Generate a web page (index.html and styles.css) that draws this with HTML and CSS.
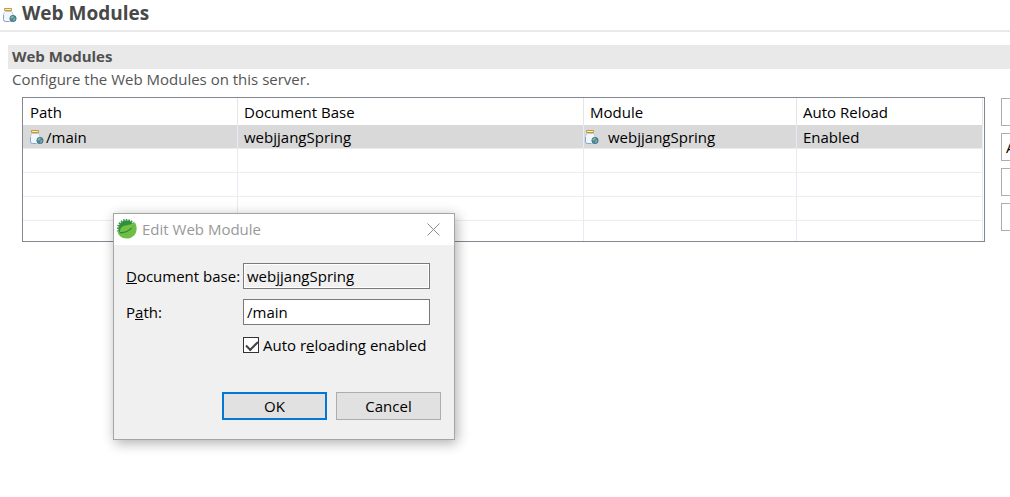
FILE: index.html
```
<!DOCTYPE html>
<html lang="en">
<head>
<meta charset="utf-8">
<title>Web Modules</title>
<meta name="viewport" content="width=device-width, initial-scale=1">
<link rel="stylesheet" href="styles.css">
</head>
<body>

<!-- jar icon, used in the header and in the table -->
<svg class="defs" aria-hidden="true">
  <defs>
    <symbol id="jar" viewBox="0 0 14 16">
      <path d="M2.500 4.500C1 5.500.5 6.800.5 8.500v4c0 1.200.8 2 2 2h6l1.500-3V8c0-1.500-.5-2.500-1.500-3.500z" fill="#f0f6fd" stroke="#b5c8df"/>
      <path d="M.5 8v4.500c0 1.200.8 2 2 2h3.500" fill="none" stroke="#86a5cb"/>
      <path d="M1.500 1.500h7v2h-7z" fill="#fbeebc" stroke="#c9992f"/>
      <circle cx="10" cy="11.500" r="3.200" fill="#4a83b0" stroke="#40708c" stroke-width=".7"/>
      <path d="M7.400 10.200l2-1.500 1.600.8-1.200 1.500-1.800.8zM10.500 11.500l2-.5-.8 2.200-1.500.8z" fill="#89bd70"/>
    </symbol>
  </defs>
</svg>

<header class="page-head">
  <svg class="jar"><use href="#jar"/></svg>
  <h1>Web Modules</h1>
</header>

<main class="section">
  <h2>Web Modules</h2>
  <p class="hint">Configure the Web Modules on this server.</p>

  <div class="modules">
    <div class="table-box">
      <table>
        <colgroup>
          <col class="col-path"><col class="col-base"><col class="col-module"><col>
        </colgroup>
        <thead>
          <tr><th>Path</th><th>Document Base</th><th>Module</th><th>Auto Reload</th></tr>
        </thead>
        <tbody>
          <tr class="selected">
            <td><span class="cell"><svg class="jar"><use href="#jar"/></svg>/main</span></td>
            <td>webjjangSpring</td>
            <td class="module"><span class="cell"><svg class="jar"><use href="#jar"/></svg>webjjangSpring</span></td>
            <td>Enabled</td>
          </tr>
          <tr><td></td><td></td><td></td><td></td></tr>
          <tr><td></td><td></td><td></td><td></td></tr>
          <tr><td></td><td></td><td></td><td></td></tr>
          <tr><td></td><td></td><td></td><td></td></tr>
        </tbody>
      </table>
    </div>
    <div class="actions">
      <button type="button" aria-label="Add Web Module"></button>
      <button type="button">Add External Web Module...</button>
      <button type="button" aria-label="Edit"></button>
      <button type="button" aria-label="Remove"></button>
    </div>
  </div>
</main>

<form class="dialog" role="dialog" aria-labelledby="dialog-title">
  <div class="titlebar">
    <svg class="spring" viewBox="0 0 20 20" aria-hidden="true">
      <!-- toothed rim, then the round body and the leaf -->
      <circle cx="9.500" cy="9.500" r="8.800" fill="none" stroke="#3d9549" stroke-width="1.600" stroke-dasharray="1.500 1.200"/>
      <circle cx="9.500" cy="9.500" r="8.300" fill="#2f8f3f"/>
      <path d="M17.500 2.500c3 5 3 11-1 14.500-4 3.600-10.500 3.400-14-.5-1.200-1.300-1.700-2.500-2-4C5 15.500 12 13.500 14.500 10.500c2-2.300 2.800-4.500 3-8z" fill="#6fbe44"/>
      <path d="M17 3c-2.500 3-5.500 2.800-8.500 3.400C4.500 7.200 2.800 9.500 3 13.500c4 1.200 8.700.5 11.200-2.300C16.200 9 17 6.200 17 3z" fill="#74c043"/>
      <path d="M3 13.800c5-.2 9-1.800 11.500-5" fill="none" stroke="#2b8a3c" stroke-width="1.200"/>
    </svg>
    <span id="dialog-title" class="title">Edit Web Module</span>
    <button type="button" class="close" aria-label="Close">
      <svg viewBox="0 0 13 13"><path d="M.5.5l12 12M12.500.5l-12 12" stroke="#8c8c8c"/></svg>
    </button>
  </div>
  <div class="fields">
    <label for="base"><u>D</u>ocument base:</label>
    <input type="text" id="base" value="webjjangSpring" readonly>
    <label for="path">P<u>a</u>th:</label>
    <input type="text" id="path" value="/main">
    <div class="check">
      <input type="checkbox" id="reload" checked>
      <label for="reload">Auto r<u>e</u>loading enabled</label>
    </div>
  </div>
  <div class="buttons">
    <button type="submit" class="default">OK</button>
    <button type="button">Cancel</button>
  </div>
</form>

</body>
</html>
```
FILE: styles.css
```
* { box-sizing: border-box; }

body {
  margin: 0;
  background: #fff;
  color: #000;
  font: 15px/24px "Open Sans", "Noto Sans", sans-serif;
  overflow-x: hidden;
}

h1, h2, p { margin: 0; }

button, input { font: inherit; color: inherit; }

.defs { position: absolute; width: 0; height: 0; }

.jar { width: 14px; height: 16px; flex: none; }

/* page title */
.page-head {
  display: flex;
  align-items: center;
  gap: 5px;
  height: 32px;
  padding: 0 3px 4px;
  border-bottom: 2px solid #e9e9e9;
}

.page-head .jar { margin-top: 3px; }

h1 { font-size: 19px; line-height: 24px; color: #484848; }

/* section */
.section { padding: 13px 0 0 8px; }

h2 {
  padding: 0 4px 2px;
  background: #e9e9e9;
  color: #505050;
  font-size: 15px;
  line-height: 22px;
}

.hint { padding: 0 4px 2px; line-height: 20px; color: #555; }

.modules {
  display: flex;
  gap: 16px;
  padding: 6px 0 0 14px;
}

.table-box {
  flex: 1;
  padding-right: 1px;
  border: 1px solid #828790;
}

table {
  width: 100%;
  table-layout: fixed;
  border-collapse: separate;
  border-spacing: 0;
}

.col-path { width: 215px; }
.col-base { width: 346px; }
.col-module { width: 213px; }

th, td {
  height: 24px;
  padding: 0 6px;
  border-right: 1px solid #e6ecf6;
  border-bottom: 1px solid #ededed;
  text-align: left;
  font-weight: normal;
  line-height: 23px;
}

th:first-child, td:first-child { padding-left: 7px; }

th { height: 27px; padding-bottom: 1px; padding-top: 2px; border-bottom: 0; border-right-color: #e5e5e5; }

.selected td { padding-top: 2px; line-height: 21px; background: #d9d9d9; }

tbody tr:last-child td { height: 20px; border-bottom: 0; }

.cell { display: flex; align-items: center; gap: 2px; }
.cell .jar { margin-bottom: 2px; }

td.module { padding-left: 1px; }
.module .cell { gap: 9px; }

/* buttons beside the table run past the window edge */
.actions {
  display: flex;
  flex-direction: column;
  gap: 7px;
  width: 9px;
  padding-top: 1px;
  overflow: hidden;
}

.actions button {
  width: 208px;
  height: 28px;
  padding: 0 4px;
  border: 1px solid #adadad;
  background: #fff;
  text-align: left;
  white-space: nowrap;
}

/* edit dialog */
.dialog {
  position: absolute;
  left: 113px;
  top: 213px;
  width: 342px;
  border: 1px solid #a5a5a5;
  background: #f0f0f0;
  box-shadow: 2px 3px 12px rgba(0, 0, 0, .32);
}

.titlebar {
  display: flex;
  align-items: center;
  gap: 5px;
  height: 31px;
  padding: 0 14px 1px 3px;
  background: #fff;
  color: #999;
}

.spring { width: 20px; height: 20px; }

.title { flex: 1; }

.close {
  display: flex;
  padding: 0;
  border: 0;
  background: none;
}

.close svg { width: 13px; height: 13px; }

.fields {
  display: grid;
  grid-template-columns: 117px 1fr;
  row-gap: 10px;
  align-items: center;
  padding: 18px 24px 0 12px;
}

.fields input[type="text"] {
  width: 100%;
  height: 26px;
  padding: 0 3px;
  border: 1px solid #7a7a7a;
  border-radius: 0;
  background: #fff;
  outline: 0;
}

.fields input[readonly] { background: #f0f0f0; box-shadow: inset 0 0 0 1px #fff; }

.check {
  grid-column: 2;
  display: flex;
  align-items: center;
  gap: 4px;
  height: 20px;
  white-space: nowrap;
}

.check input {
  appearance: none;
  width: 16px;
  height: 16px;
  margin: 0;
  border: 1px solid #333;
  background: #fff;
}

.check input:checked::before {
  content: "";
  display: block;
  width: 10px;
  height: 5px;
  margin: 3px 2px;
  border: solid #444;
  border-width: 0 0 2px 2px;
  transform: rotate(-45deg);
}

.buttons {
  display: flex;
  justify-content: flex-end;
  gap: 9px;
  padding: 37px 13px 19px;
}

.buttons button {
  width: 105px;
  height: 28px;
  padding: 0;
  border: 1px solid #adadad;
  background: #e1e1e1;
}

.buttons .default { border: 2px solid #0078d7; }
```
